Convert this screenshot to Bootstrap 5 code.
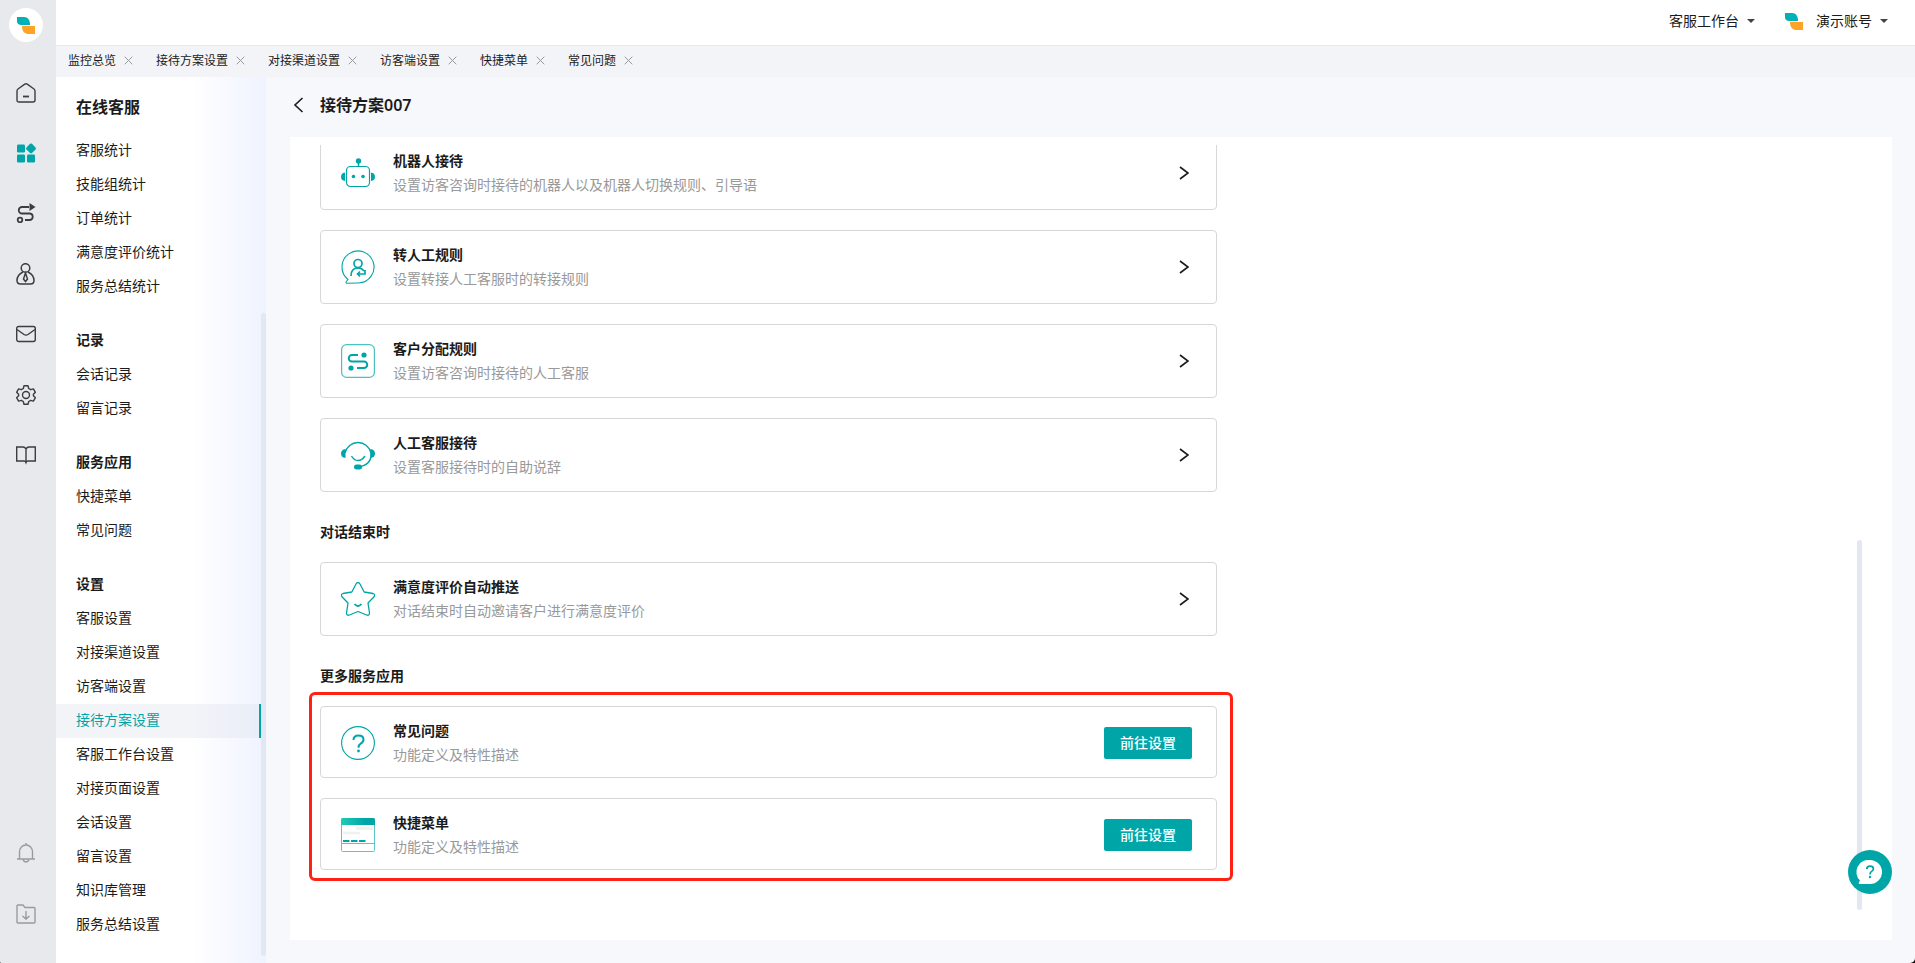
<!DOCTYPE html>
<html lang="zh-CN">
<head>
<meta charset="utf-8">
<meta name="viewport" content="width=device-width, initial-scale=1">
<title>接待方案设置</title>
<link href="https://cdn.jsdelivr.net/npm/bootstrap@5.3.0/dist/css/bootstrap.min.css" rel="stylesheet">
<style>
:root { --teal: #00a6a7; --ink: #1b1b1b; }
html { background: #1a1212; }
body { font-family: "Noto Sans", "Noto Sans CJK SC", sans-serif; font-size: 14px; line-height: 24px; color: var(--ink); background: transparent; }
a { color: inherit; text-decoration: none; }
svg { display: block; flex: none; }
h1, h2, h3, p { margin: 0; font-size: 14px; line-height: 24px; }
h1, h2, h3 { font-weight: 600; }
.app { background: #f7f8fb; border-radius: 0 0 5px 2px; }
.rail { width: 56px; background: #e8e9ed; padding: 8px 4px 39px 0; color: #3d3d3d; }
.rail-logo { width: 34px; height: 34px; border-radius: 50%; background: #fff; }
.rail-list { margin-top: 41px; gap: 40px; }
.rail-foot { gap: 41px; color: #9a9b9f; }
.topbar { height: 46px; padding: 0 27px 3px 0; border-bottom: 1px solid #e9eaee; }
.topbar-logo { margin: 0 13px 0 30px; }
.top-menu { border: 0; background: none; padding: 0; color: var(--ink); gap: 8px; }
.top-menu::after { content: ""; border: 4px solid transparent; border-top-color: #444; border-bottom: 0; }
.tabbar { height: 31px; padding: 0 0 2px 12px; background: #f3f4f7; font-size: 12px; gap: 23px; }
.tabbar button { border: 0; background: none; padding: 0; color: #999; }
.side { width: 210px; padding-top: 18px; background: linear-gradient(90deg, #fff 65%, #eff3ff); }
.side-title { font-size: 16px; padding-left: 20px; margin-bottom: 15px; }
.side-group { margin-bottom: 20px; }
.side-group h3, .side-group a { display: block; padding: 0 20px 2px; line-height: 32px; margin-right: 5px; }
.side-group a.current { color: var(--teal); background: rgba(225, 228, 238, .42); border-right: 2px solid var(--teal); }
.thumb { position: absolute; right: 0; width: 5px; border-radius: 3px; background: #e2e7f4; }
.side .thumb { top: 236px; bottom: 7px; }
.work { padding: 0 23px 23px 24px; }
.work-head { height: 60px; gap: 16px; padding: 0 0 4px 3px; }
.work-head h1 { font-size: 16px; }
.panel { padding: 8px 30px 30px 0; background: #fff; }
.scroller { padding: 0 0 40px 30px; overflow: hidden; }
.scroller > * { flex: none; }
.scroller .thumb { height: 370px; bottom: 0; }
.stack { width: 897px; max-width: 100%; gap: 20px; }
.section-head { padding: 28px 0 18px; }
.entry { height: 74px; border: 1px solid #d6d7d9; border-radius: 4px; padding: 0 27px 0 20px; background: #fff; color: var(--ink); }
.entry-sm { height: 72px; padding: 2px 24px 0 20px; }
.entry .pic { width: 34px; height: 34px; margin-right: 18px; color: var(--teal); }
.entry p { color: #999; }
.btn-go { --bs-btn-color: #fff; --bs-btn-bg: var(--teal); --bs-btn-hover-color: #fff; --bs-btn-hover-bg: #009394; --bs-btn-border-width: 0; --bs-btn-border-radius: 2px; width: 88px; height: 32px; padding: 0 0 2px; font-size: 14px; font-weight: 500; }
.marked::before { content: ""; position: absolute; inset: -14px -16px -11px -11px; border: 3px solid #ff2113; border-radius: 6px; pointer-events: none; }
.help { position: absolute; right: 23px; bottom: 69px; width: 44px; height: 44px; border: 0; border-radius: 50%; background: var(--teal); padding: 0; }
</style>
</head>
<body>
<svg width="0" height="0" class="position-absolute" aria-hidden="true">
  <symbol id="logo" viewBox="0 0 18 17"><path d="M0 0h7c4 0 6 3 6 8H5C2 8 0 7 0 4z" fill="#00b1b5"/><path d="M5 9h13v8h-6c-4 0-7-2-7-8z" fill="#ffa326"/></symbol>
  <symbol id="x" viewBox="0 0 9 9"><path d="M.7.7l7.6 7.6M8.3.7L.7 8.3" fill="none" stroke="currentColor"/></symbol>
  <symbol id="next" viewBox="0 0 10 14"><path d="M1 1l8 6-8 6" fill="none" stroke="#1b1b1b" stroke-width="1.600"/></symbol>
</svg>
<div class="app d-flex vh-100 overflow-hidden position-relative">
  <nav class="rail d-flex flex-column align-items-center flex-shrink-0">
    <a href="#" class="rail-logo d-flex align-items-center justify-content-center" aria-label="首页"><svg width="18" height="17"><use href="#logo"/></svg></a>
    <div class="rail-list d-flex flex-column">
      <a href="#" aria-label="主页"><svg width="20" height="20" viewBox="0 0 20 20" fill="none" stroke="currentColor" stroke-width="1.400"><path d="M1 8Q1 6.800 2 6L8.800 1.200Q10 .4 11.200 1.200L18 6Q19 6.800 19 8v9q0 2-2 2H3q-2 0-2-2z"/><path d="M7 13.500h6" stroke-width="1.800"/></svg></a>
      <a href="#" aria-label="应用"><svg width="20" height="20" viewBox="0 0 20 20" fill="#00a6a7"><rect x="1" y="1.500" width="8" height="8" rx="1.200"/><rect x="1" y="11.500" width="8" height="8" rx="1.200"/><rect x="11" y="11.500" width="8" height="8" rx="1.200"/><path d="M14 .8q1-.8 2 0l3.500 3.700q.8 1 0 2L16 10q-1 .8-2 0l-3.500-3.500q-.8-1 0-2z"/></svg></a>
      <a href="#" aria-label="流程"><svg width="20" height="20" viewBox="0 0 20 20" fill="none" stroke="currentColor" stroke-width="1.800"><path d="M13 4H6a3 3 0 0 0 0 6.500h8a3.300 3.300 0 0 1 0 6.500H9"/><circle cx="4" cy="17" r="2.300"/><path d="M13.500 0L19.500 4l-6 4z" fill="currentColor" stroke="none"/></svg></a>
      <a href="#" aria-label="客户"><svg width="20" height="22" viewBox="0 0 20 22" fill="none" stroke="currentColor" stroke-width="1.500"><circle cx="9.500" cy="5" r="4.300"/><path d="M7 9Q1 12 1 17.500 1 21 4.500 21h10q3.500 0 3.500-3.500Q18 12 12 9"/><path d="M9.500 10l-2 6 2 2.500 2-2.500z"/></svg></a>
      <a href="#" aria-label="邮件"><svg width="20" height="20" viewBox="0 0 20 20" fill="none" stroke="currentColor" stroke-width="1.400"><rect x=".7" y="1.500" width="18.600" height="15" rx="2"/><path d="M1 4.500l7 5q2 1.200 4 0l7-5"/></svg></a>
      <a href="#" aria-label="设置"><svg width="20" height="20" viewBox="0 0 20 20" fill="none" stroke="currentColor" stroke-width="1.400" stroke-linejoin="round"><path d="M8 .8h4l.7 2.700 2 1.200 2.700-.8 2 3.400-2 2v1.400l2 2-2 3.400-2.700-.8-2 1.200-.7 2.700H8l-.7-2.700-2-1.200-2.700.8-2-3.400 2-2V9.300l-2-2 2-3.400 2.700.8 2-1.200z"/><circle cx="10" cy="10" r="3.500"/></svg></a>
      <a href="#" aria-label="知识库"><svg width="20" height="20" viewBox="0 0 20 20" fill="none" stroke="currentColor" stroke-width="1.400"><path d="M10 4Q9 2 7 2H.7v14H8q1.500 0 2 1.500.5-1.500 2-1.500h7.300V2H13q-2 0-3 2zv14"/></svg></a>
    </div>
    <div class="rail-foot d-flex flex-column mt-auto">
      <a href="#" aria-label="通知"><svg width="20" height="20" viewBox="0 0 20 20" fill="none" stroke="currentColor" stroke-width="1.400"><path d="M10 0v2M1 16h18M3.500 16V9a6.500 7 0 0 1 13 0v7M7 17q3 4 6 0"/></svg></a>
      <a href="#" aria-label="下载"><svg width="20" height="20" viewBox="0 0 20 20" fill="none" stroke="currentColor" stroke-width="1.400"><path d="M1 2q0-1 1-1h5l2 2.500h9q1 0 1 1V18q0 1-1 1H2q-1 0-1-1zM10 7v8M6.500 12l3.500 3 3.500-3"/></svg></a>
    </div>
  </nav>
  <div class="d-flex flex-column flex-grow-1 overflow-hidden">
    <header class="topbar bg-white d-flex justify-content-end align-items-center flex-shrink-0">
      <button type="button" class="top-menu d-flex align-items-center">客服工作台</button>
      <svg class="topbar-logo" width="18" height="17"><use href="#logo"/></svg>
      <button type="button" class="top-menu d-flex align-items-center">演示账号</button>
    </header>
    <div class="tabbar d-flex align-items-center flex-shrink-0" id="tabs"></div>
    <div class="d-flex flex-grow-1 overflow-hidden">
      <aside class="side flex-shrink-0 position-relative overflow-hidden">
        <h2 class="side-title">在线客服</h2>
        <div id="side"></div>
        <div class="thumb"></div>
      </aside>
      <main class="work d-flex flex-column flex-grow-1 overflow-hidden">
        <div class="work-head d-flex align-items-center flex-shrink-0">
          <a href="#" aria-label="返回"><svg width="11" height="16" viewBox="0 0 11 16"><path d="M9.500 1L2 8l7.500 7" fill="none" stroke="#1b1b1b" stroke-width="1.600"/></svg></a>
          <h1>接待方案007</h1>
        </div>
        <section class="panel d-flex flex-column flex-grow-1 overflow-hidden">
          <div class="scroller position-relative d-flex flex-column justify-content-end flex-grow-1">
            <div class="stack d-flex flex-column">
              <a href="#" class="entry d-flex align-items-center"><svg class="pic" viewBox="0 0 34 34" fill="none" stroke="currentColor"><rect x="5.500" y="10.500" width="23" height="20" rx="4" stroke-width="1.200"/><path d="M17.500 5v5" stroke-width="1.500"/><g fill="currentColor" stroke="none"><circle cx="17.500" cy="5" r="2.700"/><circle cx="12.500" cy="20.500" r="1.800"/><circle cx="22" cy="20.500" r="1.800"/><path d="M4 16.500v8.500q-4-.5-4-4.200t4-4.300zM30 16.500v8.500q4-.5 4-4.200t-4-4.300z"/></g></svg><div class="me-auto"><h3>机器人接待</h3><p>设置访客咨询时接待的机器人以及机器人切换规则、引导语</p></div><svg width="10" height="14"><use href="#next"/></svg></a>
              <a href="#" class="entry d-flex align-items-center"><svg class="pic" viewBox="0 0 34 34" fill="none" stroke="currentColor"><path d="M7 29.500A16 16 0 1 1 17.500 33L5.500 33.300q-1.500-.5 1.500-3.800z" stroke-width="1.100"/><g stroke-width="1.700"><circle cx="17" cy="13.500" r="4"/><path d="M10 26q0-8 7-8 4 0 6 3M24 20v4h-7.500m2.500-2.500L16.500 24l2.500 2.500"/></g></svg><div class="me-auto"><h3>转人工规则</h3><p>设置转接人工客服时的转接规则</p></div><svg width="10" height="14"><use href="#next"/></svg></a>
              <a href="#" class="entry d-flex align-items-center"><svg class="pic" viewBox="0 0 34 34" fill="none" stroke="currentColor"><rect x=".6" y=".6" width="32.800" height="32.800" rx="5" stroke-width="1.200" opacity=".7"/><path d="M17 11h-6a3 3 0 0 0 0 6.500h12a3.200 3.200 0 0 1 0 6.500h-7" stroke-width="2"/><g fill="currentColor" stroke="none"><circle cx="23" cy="11" r="2.600"/><circle cx="10" cy="24" r="2.600"/></g></svg><div class="me-auto"><h3>客户分配规则</h3><p>设置访客咨询时接待的人工客服</p></div><svg width="10" height="14"><use href="#next"/></svg></a>
              <a href="#" class="entry d-flex align-items-center"><svg class="pic" viewBox="0 0 34 34" fill="none" stroke="currentColor" stroke-width="1.400"><path d="M4 15A13.300 13.300 0 0 1 30 15q1 12-13 14M10.500 18q2.500 4.500 6.500 4.500t7-4.500"/><g fill="currentColor" stroke="none"><path d="M4.500 11v9Q0 19.500 0 15.500T4.500 11zM29.500 11v9q4.500-.5 4.500-4.500T29.500 11z"/><rect x="13" y="26.500" width="8" height="5" rx="2.500"/></g></svg><div class="me-auto"><h3>人工客服接待</h3><p>设置客服接待时的自助说辞</p></div><svg width="10" height="14"><use href="#next"/></svg></a>
            </div>
            <h2 class="section-head">对话结束时</h2>
            <div class="stack d-flex flex-column">
              <a href="#" class="entry d-flex align-items-center"><svg class="pic" viewBox="0 0 34 34" fill="none" stroke="currentColor" stroke-width="1.300" stroke-linejoin="round"><path d="M15 2q2-3 4 0l4.200 8 8.800 1.500q3 1 .8 3.500L27 21l1.500 10q0 3-3 2L17 29.500 8.500 33q-3 1-3-2L7 21 1.200 15q-2.200-2.500.8-3.500L10.800 10z"/><path d="M13.500 22q3.500 4 7 0" stroke-width="1.800"/></svg><div class="me-auto"><h3>满意度评价自动推送</h3><p>对话结束时自动邀请客户进行满意度评价</p></div><svg width="10" height="14"><use href="#next"/></svg></a>
            </div>
            <h2 class="section-head">更多服务应用</h2>
            <div class="stack marked position-relative d-flex flex-column">
              <div class="entry entry-sm d-flex align-items-center"><svg class="pic" viewBox="0 0 34 34" fill="none" stroke="currentColor"><circle cx="17" cy="17" r="16.400" stroke-width="1.100"/><path d="M12.500 14q0-4.500 5-4.500t5 4q0 2.500-2.800 4.200-2.200 1.300-2.200 4" stroke-width="2"/><circle cx="17.500" cy="25" r="1.400" fill="currentColor" stroke="none"/></svg><div class="me-auto"><h3>常见问题</h3><p>功能定义及特性描述</p></div><button type="button" class="btn btn-go">前往设置</button></div>
              <div class="entry entry-sm d-flex align-items-center"><svg class="pic" viewBox="0 0 34 34"><defs><linearGradient id="bar"><stop stop-color="#20ccb5"/><stop offset=".7" stop-color="#00a6a7"/></linearGradient></defs><rect x=".5" y=".5" width="33" height="33" rx="1" fill="none" stroke="#5fc4c4"/><path d="M0 7V1.500Q0 0 1.500 0h31Q34 0 34 1.500V7z" fill="url(#bar)"/><path d="M15 10.500h17M2 15h17" stroke="#f0f0f0" stroke-width="2.500"/><path d="M2 23h6.500m1.500 0h6.500m1.500 0h6.500" stroke="#00a6a7" stroke-width="2"/><path d="M0 25.500h34" stroke="#5fc4c4"/></svg><div class="me-auto"><h3>快捷菜单</h3><p>功能定义及特性描述</p></div><button type="button" class="btn btn-go">前往设置</button></div>
            </div>
            <div class="thumb"></div>
          </div>
        </section>
      </main>
    </div>
  </div>
  <button type="button" class="help" aria-label="帮助"><svg width="44" height="44" viewBox="0 0 44 44"><path d="M22 10a12 12 0 0 1 0 24H11q-1-1.500 1-3.500A12 12 0 0 1 22 10z" fill="#fff"/><path d="M18.800 19q0-2.800 3.300-2.800t3.300 2.500q0 1.500-1.800 2.700-1.600 1-1.600 3" fill="none" stroke="#00a6a7" stroke-width="1.700"/><circle cx="22" cy="27" r="1.200" fill="#00a6a7"/></svg></button>
</div>
<script src="https://cdn.jsdelivr.net/npm/bootstrap@5.3.0/dist/js/bootstrap.bundle.min.js"></script>
<script>
const tabs = ["监控总览", "接待方案设置", "对接渠道设置", "访客端设置", "快捷菜单", "常见问题"];
document.getElementById("tabs").innerHTML = tabs.map(t =>
  `<div class="d-flex align-items-center gap-2"><a href="#">${t}</a><button type="button" aria-label="关闭"><svg width="9" height="9"><use href="#x"/></svg></button></div>`).join("");
const groups = [
  ["", ["客服统计", "技能组统计", "订单统计", "满意度评价统计", "服务总结统计"]],
  ["记录", ["会话记录", "留言记录"]],
  ["服务应用", ["快捷菜单", "常见问题"]],
  ["设置", ["客服设置", "对接渠道设置", "访客端设置", "接待方案设置", "客服工作台设置", "对接页面设置", "会话设置", "留言设置", "知识库管理", "服务总结设置"]]
];
document.getElementById("side").innerHTML = groups.map(([head, items]) =>
  `<div class="side-group">${head ? `<h3>${head}</h3>` : ""}${items.map(i => `<a href="#"${i === "接待方案设置" ? ' class="current"' : ""}>${i}</a>`).join("")}</div>`).join("");
</script>
</body>
</html>
